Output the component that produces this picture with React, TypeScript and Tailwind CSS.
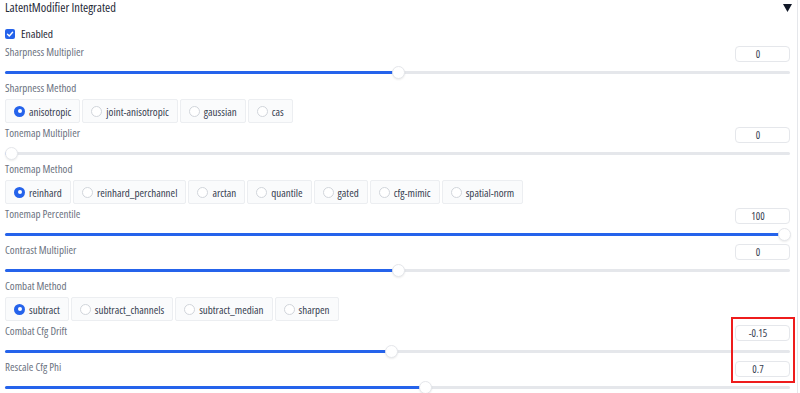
import React from "react";

const FONT: React.CSSProperties = { fontFamily: "'Open Sans', sans-serif", fontStretch: "condensed" };

function NumBox({ value }: { value: string }) {
  return (
    <div className="w-[55px] h-[16px] rounded-[4px] border border-[#e5e7eb] bg-white flex items-center justify-center pr-[9px] text-[10.5px] leading-none text-[#374151]">
      {value}
    </div>
  );
}

function Slider({ p }: { p: number }) {
  const center = 6.5 + p * 773;
  return (
    <div className="relative h-[13px]">
      <div className="absolute left-0 right-0 top-[5px] h-[3px] rounded-full bg-[#e5e7eb]" />
      <div
        className="absolute left-0 top-[5px] h-[3px] rounded-full bg-[#2563eb]"
        style={{ width: `${center}px` }}
      />
      <div
        className="absolute top-0 w-[13px] h-[13px] rounded-full bg-white border border-[#e5e7eb] shadow-[0_1px_2px_rgba(0,0,0,0.08)]"
        style={{ left: `${center - 6.5}px` }}
      />
    </div>
  );
}

function SliderBlock({ label, value, p }: { label: string; value: string; p: number }) {
  return (
    <div className="h-[36px] flex flex-col">
      <div className="h-[20px] flex justify-between items-start">
        <span className="text-[11px] leading-[12px] text-[#6b7280]">{label}</span>
        <NumBox value={value} />
      </div>
      <Slider p={p} />
    </div>
  );
}

function RadioBlock({ label, options }: { label: string; options: string[] }) {
  return (
    <div className="h-[45px] flex flex-col">
      <div className="h-[17px] text-[11px] leading-[12px] text-[#6b7280]">{label}</div>
      <div className="flex gap-[2px] h-[24px] shrink-0">
        {options.map((o, i) => (
          <div
            key={o}
            className="h-[24px] flex items-center gap-[4px] pl-[8px] pr-[8px] border border-[#eceef1] bg-[#fafbfc] rounded-[2px]"
          >
            {i === 0 ? (
              <span className="w-[11px] h-[11px] rounded-full bg-[#2563eb] flex items-center justify-center">
                <span className="w-[4px] h-[4px] rounded-full bg-white" />
              </span>
            ) : (
              <span className="w-[11px] h-[11px] rounded-full bg-white border border-[#d1d5db]" />
            )}
            <span className="text-[11px] leading-none text-[#374151]">{o}</span>
          </div>
        ))}
      </div>
    </div>
  );
}

export default function App() {
  return (
    <div className="relative w-[800px] h-[393px] overflow-hidden bg-white leading-none" style={FONT}>
      <div className="w-[798px] h-[393px] border-r border-[#e5e7eb] pl-[5px] pr-[7px]">
        <div className="h-[15px] flex items-center justify-between">
          <span className="text-[12.5px] leading-[15px] text-[#1f2937]">LatentModifier Integrated</span>
          <svg width="9" height="8" viewBox="0 0 9 8" className="mr-[-2px]">
            <path d="M0 0 H9 L4.5 8 Z" fill="#111827" />
          </svg>
        </div>
        <div className="mt-[14px] h-[10px] flex items-center gap-[6px]">
          <span className="w-[10px] h-[10px] rounded-[2px] bg-[#2563eb] flex items-center justify-center">
            <svg width="8" height="8" viewBox="0 0 8 8">
              <path d="M1.5 4.2 L3.3 6 L6.6 2.2" stroke="white" strokeWidth="1.4" fill="none" strokeLinecap="round" strokeLinejoin="round" />
            </svg>
          </span>
          <span className="text-[11.5px] leading-none text-[#1f2937]">Enabled</span>
        </div>
        <div className="mt-[7px]">
          <SliderBlock label="Sharpness Multiplier" value="0" p={0.5} />
          <RadioBlock label="Sharpness Method" options={["anisotropic", "joint-anisotropic", "gaussian", "cas"]} />
          <SliderBlock label="Tonemap Multiplier" value="0" p={0} />
          <RadioBlock
            label="Tonemap Method"
            options={["reinhard", "reinhard_perchannel", "arctan", "quantile", "gated", "cfg-mimic", "spatial-norm"]}
          />
          <SliderBlock label="Tonemap Percentile" value="100" p={1} />
          <SliderBlock label="Contrast Multiplier" value="0" p={0.5} />
          <RadioBlock label="Combat Method" options={["subtract", "subtract_channels", "subtract_median", "sharpen"]} />
          <SliderBlock label="Combat Cfg Drift" value="-0.15" p={0.492} />
          <SliderBlock label="Rescale Cfg Phi" value="0.7" p={0.536} />
        </div>
      </div>
      <div className="absolute left-[731px] top-[317px] w-[64px] h-[66px] border-2 border-[#ee1c1c]" />
    </div>
  );
}
